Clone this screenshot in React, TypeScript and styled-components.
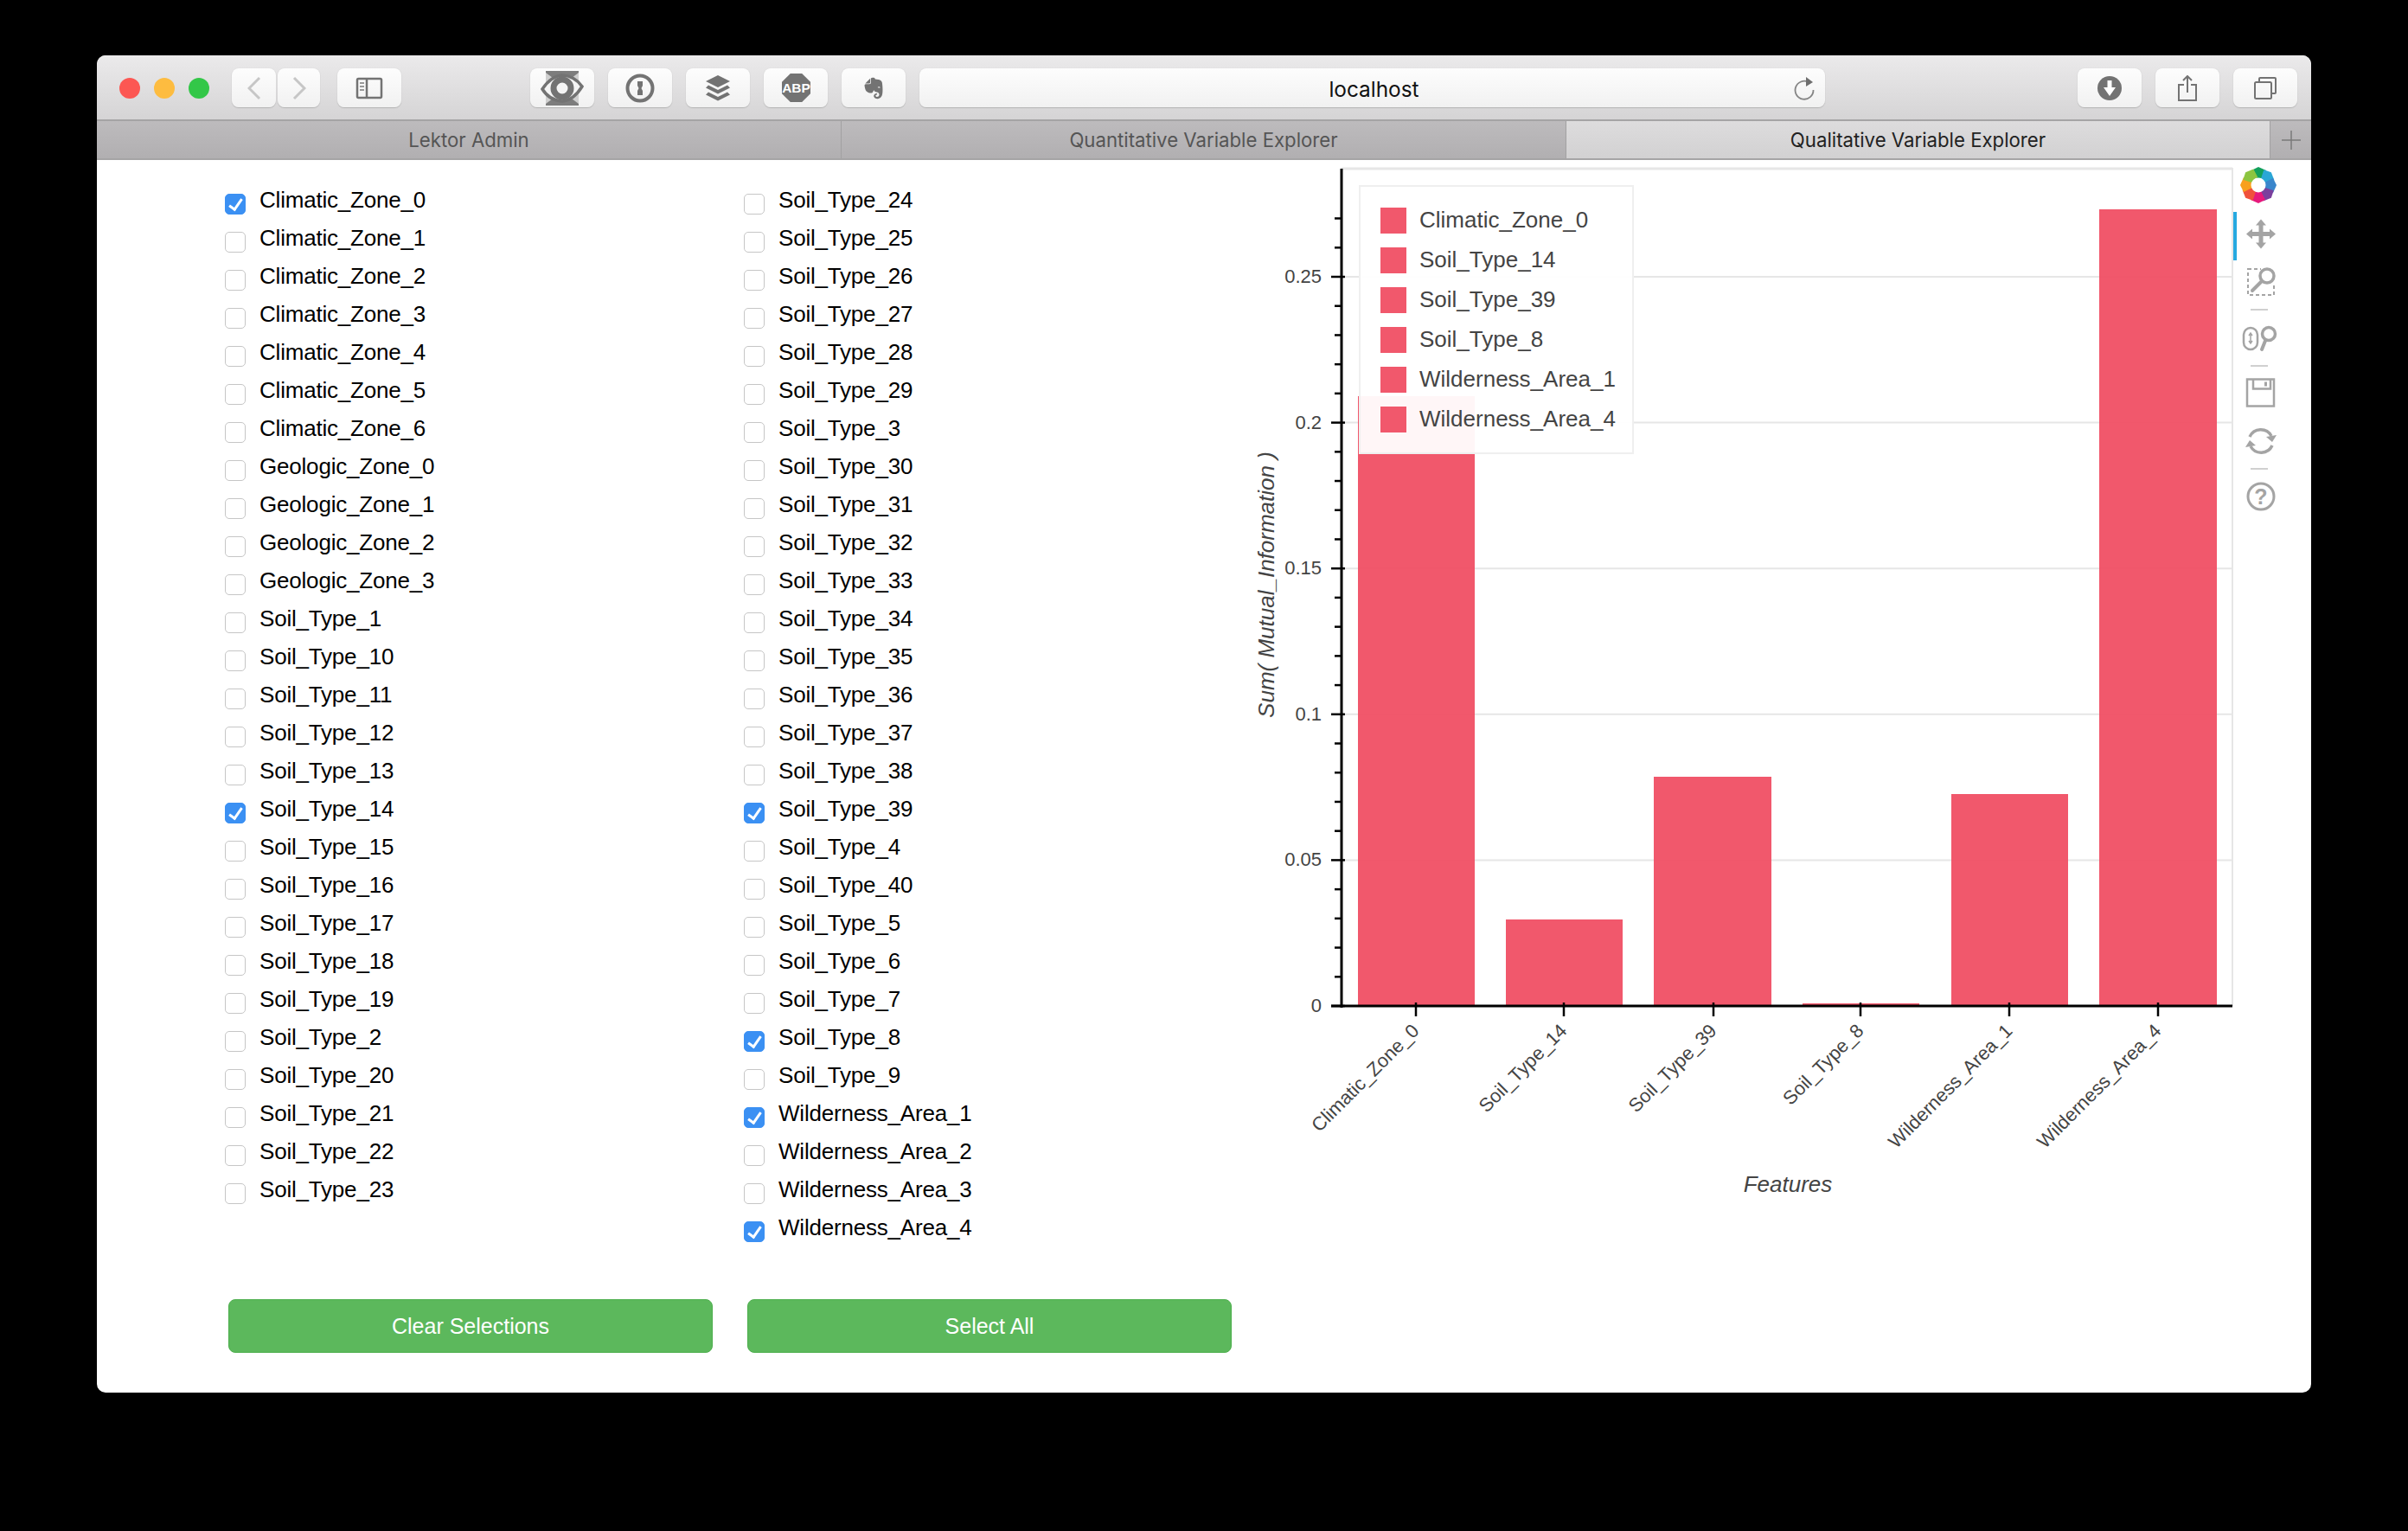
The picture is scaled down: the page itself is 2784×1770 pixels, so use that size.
import { useState } from 'react';
import styled, { createGlobalStyle } from 'styled-components';
import { FaEvernote } from 'react-icons/fa';

const GlobalStyle = createGlobalStyle`
  html, body {
    margin: 0;
    background: #000;
  }
  body {
    padding: 64px 112px;
    font-family: "Liberation Sans", Arial, sans-serif;
  }
`;

const BrowserWindow = styled.div`
  width: 2560px;
  height: 1546px;
  background: #fff;
  border-radius: 10px;
  overflow: hidden;
  display: flex;
  flex-direction: column;
`;

const Toolbar = styled.div`
  height: 74px;
  box-sizing: border-box;
  padding: 15px 16px 14px 26px;
  display: flex;
  align-items: stretch;
  background: linear-gradient(#ebeaeb, #d5d4d5);
`;

const Lights = styled.div`
  display: flex;
  align-items: center;
  gap: 16px;
  margin-right: 26px;
`;

const Light = styled.span<{ $color: string }>`
  width: 24px;
  height: 24px;
  border-radius: 50%;
  background: ${(p) => p.$color};
`;

const ToolButton = styled.div<{ $width?: number; $gap?: number }>`
  width: ${(p) => p.$width ?? 74}px;
  margin-left: ${(p) => p.$gap ?? 16}px;
  flex: none;
  box-sizing: border-box;
  display: flex;
  align-items: center;
  justify-content: center;
  border-radius: 8px;
  background: linear-gradient(#fdfdfd, #f1f1f1);
  box-shadow: 0 1px 1px #b5b5b5, 0 0 1px #c8c8c8;
`;

const AddressBar = styled.div`
  flex: 1;
  margin-left: 16px;
  padding: 2px 0 0 4px;
  position: relative;
  display: flex;
  align-items: center;
  justify-content: center;
  border-radius: 8px;
  background: linear-gradient(#fdfdfd, #f1f1f1);
  box-shadow: 0 1px 1px #b5b5b5, 0 0 1px #c8c8c8;
  font-family: Inter, "Liberation Sans", sans-serif;
  font-size: 24.4px;
  color: #111;
`;

const ReloadIcon = styled.svg`
  position: absolute;
  right: 10px;
  top: 8px;
`;

const TabBar = styled.div`
  height: 47px;
  box-sizing: border-box;
  display: flex;
  border-top: 2px solid #a5a4a5;
  border-bottom: 2px solid #a5a4a5;
`;

const Tab = styled.div<{ $width: number; $active?: boolean }>`
  width: ${(p) => p.$width}px;
  box-sizing: border-box;
  display: flex;
  align-items: center;
  justify-content: center;
  border-right: 1px solid #a2a1a2;
  background: ${(p) => (p.$active ? 'linear-gradient(#dddcdd, #d2d1d2)' : 'linear-gradient(#bdbbbd, #b1afb1)')};
  color: ${(p) => (p.$active ? '#222' : '#555')};
  font-family: Inter, "Liberation Sans", sans-serif;
  font-size: 22.2px;
`;

const NewTab = styled.div`
  flex: 1;
  display: flex;
  align-items: center;
  justify-content: center;
  background: linear-gradient(#bdbbbd, #b1afb1);
`;

const Main = styled.div`
  flex: 1;
  display: flex;
  min-height: 0;
`;

const FormPanel = styled.div`
  width: 1312px;
  flex: none;
  box-sizing: border-box;
  padding: 24px 0 0 152px;
`;

const Columns = styled.div`
  display: grid;
  grid-template-columns: 560px 560px;
  column-gap: 40px;
  height: 1232px;
`;

const Option = styled.label`
  height: 44px;
  margin-left: -4px;
  display: flex;
  align-items: flex-start;
  gap: 16px;
  font-size: 26px;
  letter-spacing: -0.2px;
  line-height: 44px;
  color: #000;
`;

const Check = styled.input`
  appearance: none;
  position: relative;
  width: 24px;
  height: 24px;
  margin: 15px 0 0;
  flex: none;
  box-sizing: border-box;
  background: #fff;
  border: 1.5px solid #c6c6c6;
  border-radius: 5px;

  &:checked {
    background: #3b90f3;
    border-color: #3b90f3;
  }

  &:checked::after {
    content: '';
    position: absolute;
    left: 6.5px;
    top: 2px;
    width: 6px;
    height: 13px;
    border: solid #fff;
    border-width: 0 3px 3px 0;
    transform: rotate(35deg);
  }
`;

const Actions = styled.div`
  display: grid;
  grid-template-columns: 560px 560px;
  column-gap: 40px;
  margin-top: 61px;
`;

const ActionButton = styled.button`
  height: 62px;
  border: 1px solid #4cae4c;
  border-radius: 8px;
  background: #5cb85c;
  color: #fff;
  font-family: inherit;
  font-size: 25px;
  cursor: pointer;
`;

const ChartSvg = styled.svg`
  width: 1158px;
  height: 1240px;
  flex: none;
  display: block;
`;

const PlotTools = styled.div`
  flex: 1;
  display: flex;
  flex-direction: column;
  padding-top: 8px;
`;

const Logo = styled.svg`
  margin: 0 0 10px 8px;
  display: block;
`;

const Tool = styled.div<{ $active?: boolean }>`
  width: 64px;
  height: 54px;
  box-sizing: border-box;
  display: flex;
  align-items: center;
  justify-content: center;
  position: relative;

  &::before {
    content: ${(p) => (p.$active ? "''" : 'none')};
    position: absolute;
    left: 0;
    top: 0;
    bottom: -2px;
    width: 4px;
    background: #26a9e0;
  }
`;

const ToolDivider = styled.div`
  width: 20px;
  height: 2px;
  margin: 4px 0 5px 20px;
  background: #d0d0d0;
`;

const columnOne = [
  'Climatic_Zone_0', 'Climatic_Zone_1', 'Climatic_Zone_2', 'Climatic_Zone_3', 'Climatic_Zone_4',
  'Climatic_Zone_5', 'Climatic_Zone_6', 'Geologic_Zone_0', 'Geologic_Zone_1', 'Geologic_Zone_2',
  'Geologic_Zone_3', 'Soil_Type_1', 'Soil_Type_10', 'Soil_Type_11', 'Soil_Type_12', 'Soil_Type_13',
  'Soil_Type_14', 'Soil_Type_15', 'Soil_Type_16', 'Soil_Type_17', 'Soil_Type_18', 'Soil_Type_19',
  'Soil_Type_2', 'Soil_Type_20', 'Soil_Type_21', 'Soil_Type_22', 'Soil_Type_23',
];

const columnTwo = [
  'Soil_Type_24', 'Soil_Type_25', 'Soil_Type_26', 'Soil_Type_27', 'Soil_Type_28', 'Soil_Type_29',
  'Soil_Type_3', 'Soil_Type_30', 'Soil_Type_31', 'Soil_Type_32', 'Soil_Type_33', 'Soil_Type_34',
  'Soil_Type_35', 'Soil_Type_36', 'Soil_Type_37', 'Soil_Type_38', 'Soil_Type_39', 'Soil_Type_4',
  'Soil_Type_40', 'Soil_Type_5', 'Soil_Type_6', 'Soil_Type_7', 'Soil_Type_8', 'Soil_Type_9',
  'Wilderness_Area_1', 'Wilderness_Area_2', 'Wilderness_Area_3', 'Wilderness_Area_4',
];

const initialSelection = [
  'Climatic_Zone_0', 'Soil_Type_14', 'Soil_Type_39', 'Soil_Type_8', 'Wilderness_Area_1', 'Wilderness_Area_4',
];

// chart geometry, in page pixels (the svg viewBox starts at the panel's corner)
const AXIS_X = 1551;
const AXIS_Y = 1163;
const RIGHT = 2581;
const TOP = 195;
const UNIT = 168.6 / 0.05;
const BAR_FILL = 'rgba(240, 78, 99, 0.94)';
const INK = '#444';

const bars = [
  { name: 'Climatic_Zone_0', x: 1570, w: 135, top: 458, tick: 1637 },
  { name: 'Soil_Type_14', x: 1741, w: 135, top: 1063, tick: 1808 },
  { name: 'Soil_Type_39', x: 1912, w: 136, top: 898, tick: 1981 },
  { name: 'Soil_Type_8', x: 2084, w: 135, top: 1160, tick: 2151 },
  { name: 'Wilderness_Area_1', x: 2256, w: 135, top: 918, tick: 2323 },
  { name: 'Wilderness_Area_4', x: 2427, w: 136, top: 242, tick: 2495 },
];

const majorTicks = [
  { label: '0', value: 0 },
  { label: '0.05', value: 0.05 },
  { label: '0.1', value: 0.1 },
  { label: '0.15', value: 0.15 },
  { label: '0.2', value: 0.2 },
  { label: '0.25', value: 0.25 },
];

const minorTicks = Array.from({ length: 28 }, (_, i) => i * 0.01).filter((v) => Math.round(v * 100) % 5 !== 0);

const Chart = () => (
  <ChartSvg viewBox="1424 185 1158 1240" fontFamily='"Liberation Sans", Arial, sans-serif'>
    <line x1={AXIS_X} y1={TOP} x2={RIGHT} y2={TOP} stroke="#e6e6e6" strokeWidth="3" />
    <line x1={RIGHT} y1={TOP - 1} x2={RIGHT} y2={AXIS_Y} stroke="#e6e6e6" strokeWidth="2" />
    {majorTicks.slice(1).map((t) => (
      <line
        key={t.label}
        x1={AXIS_X}
        x2={RIGHT}
        y1={AXIS_Y - t.value * UNIT}
        y2={AXIS_Y - t.value * UNIT}
        stroke="#e6e6e6"
        strokeWidth="2"
      />
    ))}
    {bars.map((b) => (
      <rect key={b.name} x={b.x} y={b.top} width={b.w} height={AXIS_Y - b.top} fill={BAR_FILL} />
    ))}

    {/* axes */}
    <line x1={AXIS_X} y1={TOP} x2={AXIS_X} y2={AXIS_Y + 2} stroke="#000" strokeWidth="3" />
    <line x1={1539} y1={AXIS_Y} x2={RIGHT} y2={AXIS_Y} stroke="#000" strokeWidth="3" />
    {minorTicks.map((v) => (
      <line key={v} x1={1543} x2={AXIS_X} y1={AXIS_Y - v * UNIT} y2={AXIS_Y - v * UNIT} stroke="#000" strokeWidth="2.5" />
    ))}
    {majorTicks.map((t) => (
      <g key={t.label}>
        <line x1={1539} x2={1555} y1={AXIS_Y - t.value * UNIT} y2={AXIS_Y - t.value * UNIT} stroke="#000" strokeWidth="2.5" />
        <text x={1528} y={AXIS_Y - t.value * UNIT + 7} textAnchor="end" fontSize="22" fill={INK}>
          {t.label}
        </text>
      </g>
    ))}
    {bars.map((b) => (
      <g key={b.name}>
        <line x1={b.tick} x2={b.tick} y1={1159} y2={1175} stroke="#000" strokeWidth="2.5" />
        <text
          x={b.tick + 5}
          y={1193}
          textAnchor="end"
          fontSize="22"
          fill={INK}
          transform={`rotate(-45 ${b.tick + 5} 1193)`}
        >
          {b.name}
        </text>
      </g>
    ))}
    <text
      x={1473}
      y={676}
      textAnchor="middle"
      fontSize="26"
      fontStyle="italic"
      fill={INK}
      transform="rotate(-90 1473 676)"
    >
      Sum( Mutual_Information )
    </text>
    <text x={2067} y={1378} textAnchor="middle" fontSize="26" fontStyle="italic" fill={INK}>
      Features
    </text>

    {/* legend */}
    <rect x={1572} y={215} width={316} height={309} fill="rgba(255, 255, 255, 0.95)" stroke="#efefef" strokeWidth="2" />
    {bars.map((b, i) => (
      <g key={b.name}>
        <rect x={1596} y={240 + i * 46} width={30} height={30} fill={BAR_FILL} />
        <text x={1641} y={263 + i * 46} fontSize="26" fill={INK}>
          {b.name}
        </text>
      </g>
    ))}
  </ChartSvg>
);

const petalColors = ['#12a05c', '#2aa7d6', '#3a86cc', '#7a3f9d', '#e6197c', '#f0513c', '#f8a01e', '#8cc540'];

const BokehLogo = () => (
  <Logo width="42" height="42" viewBox="-21 -21 42 42">
    {petalColors.map((color, i) => (
      <path key={color} d="M-8 -17 L0 -21 L9 -17 L6 -7 L-3 -7 Z" fill={color} transform={`rotate(${i * 45})`} />
    ))}
    <circle r="8.5" fill="#fff" />
  </Logo>
);

const TOOL_GREY = '#a4a4a4';

const PanIcon = () => (
  <svg width="40" height="40" viewBox="0 1.5 40 40" fill={TOOL_GREY}>
    <path d="M20 3 L26 10 L22.5 10 L22.5 17.5 L30 17.5 L30 14 L37 20 L30 26 L30 22.5 L22.5 22.5 L22.5 30 L26 30 L20 37 L14 30 L17.5 30 L17.5 22.5 L10 22.5 L10 26 L3 20 L10 14 L10 17.5 L17.5 17.5 L17.5 10 L14 10 Z" />
  </svg>
);

const BoxZoomIcon = () => (
  <svg width="40" height="40" viewBox="0 0 40 40" fill="none" stroke={TOOL_GREY}>
    <rect x="5" y="5" width="30" height="30" strokeWidth="2" strokeDasharray="4 3" />
    <rect x="20" y="1" width="20" height="20" fill="#fff" stroke="none" />
    <circle cx="27" cy="13" r="8" strokeWidth="3.5" fill="#fff" />
    <path d="M21 19 L10 30" strokeWidth="4" strokeLinecap="round" />
  </svg>
);

const WheelZoomIcon = () => (
  <svg width="44" height="40" viewBox="0 0 44 40" fill="none" stroke={TOOL_GREY}>
    <rect x="2" y="8" width="16" height="25" rx="8" strokeWidth="2.5" />
    <path d="M10 15 L10 25 M8 17 L10 14 L12 17 M8 23 L10 26 L12 23" strokeWidth="1.5" />
    <circle cx="31" cy="15" r="7.5" strokeWidth="3.5" />
    <path d="M27 23 L23 33" strokeWidth="4" strokeLinecap="round" />
  </svg>
);

const SaveIcon = () => (
  <svg width="40" height="40" viewBox="0 1.5 40 40" fill="none" stroke={TOOL_GREY} strokeWidth="2.5">
    <rect x="4" y="4" width="31" height="31" />
    <path d="M11 4 L11 15 L31 15 L31 4" />
    <rect x="24" y="7" width="3" height="5" fill={TOOL_GREY} stroke="none" />
  </svg>
);

const ResetIcon = () => (
  <svg width="40" height="40" viewBox="0 0 40 40" fill="none" stroke={TOOL_GREY} strokeWidth="3.5">
    <path d="M7 15 A14 14 0 0 1 32 14" />
    <path d="M33 25 A14 14 0 0 1 8 26" />
    <path d="M26 15 L38 13 L33 21 Z M14 25 L2 27 L7 19 Z" fill={TOOL_GREY} stroke="none" />
  </svg>
);

const HelpIcon = () => (
  <svg width="40" height="40" viewBox="0 1 40 40" fill="none" stroke={TOOL_GREY} strokeWidth="3">
    <circle cx="20" cy="20" r="15" />
    <text x="20" y="29" textAnchor="middle" fontSize="25" fontWeight="700" fill={TOOL_GREY} stroke="none">
      ?
    </text>
  </svg>
);

const ICON_GREY = '#737373';

const Chevron = ({ flip }: { flip?: boolean }) => (
  <svg width="16" height="28" viewBox="0 0 16 28" fill="none" stroke="#c6c6c6" strokeWidth="3">
    <path d={flip ? 'M2 2 L14 14 L2 26' : 'M14 2 L2 14 L14 26'} />
  </svg>
);

const SidebarIcon = () => (
  <svg width="32" height="26" viewBox="0 0 32 26" fill="none" stroke={ICON_GREY} strokeWidth="2.5">
    <rect x="2" y="2" width="28" height="22" rx="1.5" />
    <path d="M13 2 L13 24" />
    <path d="M5 7 L10 7 M5 11 L10 11 M5 15 L10 15" strokeWidth="2" stroke="#999" />
  </svg>
);

const EyeIcon = () => (
  <svg width="50" height="44" viewBox="0 0 50 44">
    <rect x="6" y="2" width="38" height="40" fill="#cfcfcf" />
    <path d="M6 2 L44 2 L44 4 L36 10 L14 10 L6 4 Z M6 42 L44 42 L44 40 L36 34 L14 34 L6 40 Z" fill="#7d7d7d" />
    <path d="M2 23 Q12 8 25 7 Q40 8 48 20 Q38 36 25 37 Q10 36 2 23 Z" fill="#f4f4f4" stroke={ICON_GREY} strokeWidth="3.5" />
    <circle cx="25" cy="22" r="10" fill="none" stroke={ICON_GREY} strokeWidth="7" />
  </svg>
);

const OnePasswordIcon = () => (
  <svg width="34" height="34" viewBox="0 0 34 34">
    <circle cx="17" cy="17" r="14.5" fill="none" stroke={ICON_GREY} strokeWidth="4" />
    <path d="M14 9 L20 9 L20 14 L18.5 17 L20 20 L20 25 L14 25 L14 20 L15.5 17 L14 14 Z" fill={ICON_GREY} />
  </svg>
);

const BufferIcon = () => (
  <svg width="30" height="30" viewBox="0 0 30 30" fill={ICON_GREY}>
    <path d="M15 0 L29 7 L15 14 L1 7 Z" />
    <path d="M4 11.5 L15 17 L26 11.5 L29 14.5 L15 21.5 L1 14.5 Z" />
    <path d="M4 19.5 L15 25 L26 19.5 L29 22.5 L15 29.5 L1 22.5 Z" />
  </svg>
);

const AbpIcon = () => (
  <svg width="33" height="33" viewBox="0 0 32 32">
    <path d="M9.5 0 L22.5 0 L32 9.5 L32 22.5 L22.5 32 L9.5 32 L0 22.5 L0 9.5 Z" fill={ICON_GREY} />
    <text x="16" y="21.5" textAnchor="middle" fontSize="15" fontWeight="700" fontFamily='"Liberation Sans", sans-serif' fill="#fff">
      ABP
    </text>
  </svg>
);

const ReloadGlyph = () => (
  <ReloadIcon width="28" height="30" viewBox="0 0 28 30" fill="none" stroke="#858585" strokeWidth="1.8">
    <path d="M19 8 A10.5 10.5 0 1 0 24.5 17" />
    <path d="M16 2 L24 8 L16 13 Z" fill="#6e6e6e" stroke="none" />
  </ReloadIcon>
);

const DownloadIcon = () => (
  <svg width="28" height="30" viewBox="0 0 28 30">
    <circle cx="14" cy="15" r="14" fill={ICON_GREY} />
    <path d="M11.5 6 L16.5 6 L16.5 14 L21 14 L14 24 L7 14 L11.5 14 Z" fill="#fff" />
  </svg>
);

const ShareIcon = () => (
  <svg width="24" height="30" viewBox="0 0 24 30" fill="none" stroke={ICON_GREY} strokeWidth="2">
    <path d="M8 11 L2 11 L2 29 L22 29 L22 11 L16 11" />
    <path d="M12 20 L12 2 M7 6 L12 1 L17 6" />
  </svg>
);

const TabsIcon = () => (
  <svg width="26" height="26" viewBox="0 0 26 26" fill="none" stroke={ICON_GREY} strokeWidth="2">
    <path d="M6 6 L6 2 Q6 1 7 1 L24 1 Q25 1 25 2 L25 18 Q25 19 24 19 L20 19" />
    <rect x="1" y="6" width="19" height="19" rx="1.5" />
  </svg>
);

const App = () => {
  const [selected, setSelected] = useState<string[]>(initialSelection);

  const toggle = (name: string) => {
    setSelected((prev) => (prev.includes(name) ? prev.filter((n) => n !== name) : [...prev, name]));
  };

  const renderColumn = (names: string[]) => (
    <div>
      {names.map((name) => (
        <Option key={name}>
          <Check type="checkbox" checked={selected.includes(name)} onChange={() => toggle(name)} />
          {name}
        </Option>
      ))}
    </div>
  );

  return (
    <>
      <GlobalStyle />
      <BrowserWindow>
        <Toolbar>
          <Lights>
            <Light $color="#fc5753" />
            <Light $color="#fdbc40" />
            <Light $color="#33c748" />
          </Lights>
          <ToolButton $width={51} $gap={0}>
            <Chevron />
          </ToolButton>
          <ToolButton $width={49} $gap={2}>
            <Chevron flip />
          </ToolButton>
          <ToolButton $gap={20}>
            <SidebarIcon />
          </ToolButton>
          <ToolButton $gap={149}>
            <EyeIcon />
          </ToolButton>
          <ToolButton>
            <OnePasswordIcon />
          </ToolButton>
          <ToolButton>
            <BufferIcon />
          </ToolButton>
          <ToolButton>
            <AbpIcon />
          </ToolButton>
          <ToolButton>
            <FaEvernote size={28} color={ICON_GREY} />
          </ToolButton>
          <AddressBar>
            localhost
            <ReloadGlyph />
          </AddressBar>
          <ToolButton $gap={292}>
            <DownloadIcon />
          </ToolButton>
          <ToolButton>
            <ShareIcon />
          </ToolButton>
          <ToolButton>
            <TabsIcon />
          </ToolButton>
        </Toolbar>
        <TabBar>
          <Tab $width={861}>Lektor Admin</Tab>
          <Tab $width={838}>Quantitative Variable Explorer</Tab>
          <Tab $width={814} $active>
            Qualitative Variable Explorer
          </Tab>
          <NewTab>
            <svg width="24" height="24" viewBox="0 0 24 24" stroke="#7a7a7a" strokeWidth="1.5">
              <path d="M12 1 L12 23 M1 12 L23 12" />
            </svg>
          </NewTab>
        </TabBar>
        <Main>
          <FormPanel>
            <Columns>
              {renderColumn(columnOne)}
              {renderColumn(columnTwo)}
            </Columns>
            <Actions>
              <ActionButton onClick={() => setSelected([])}>Clear Selections</ActionButton>
              <ActionButton onClick={() => setSelected([...columnOne, ...columnTwo])}>Select All</ActionButton>
            </Actions>
          </FormPanel>
          <Chart />
          <PlotTools>
            <BokehLogo />
            <Tool $active>
              <PanIcon />
            </Tool>
            <Tool>
              <BoxZoomIcon />
            </Tool>
            <ToolDivider />
            <Tool>
              <WheelZoomIcon />
            </Tool>
            <ToolDivider />
            <Tool>
              <SaveIcon />
            </Tool>
            <Tool>
              <ResetIcon />
            </Tool>
            <ToolDivider />
            <Tool>
              <HelpIcon />
            </Tool>
          </PlotTools>
        </Main>
      </BrowserWindow>
    </>
  );
};

export default App;
